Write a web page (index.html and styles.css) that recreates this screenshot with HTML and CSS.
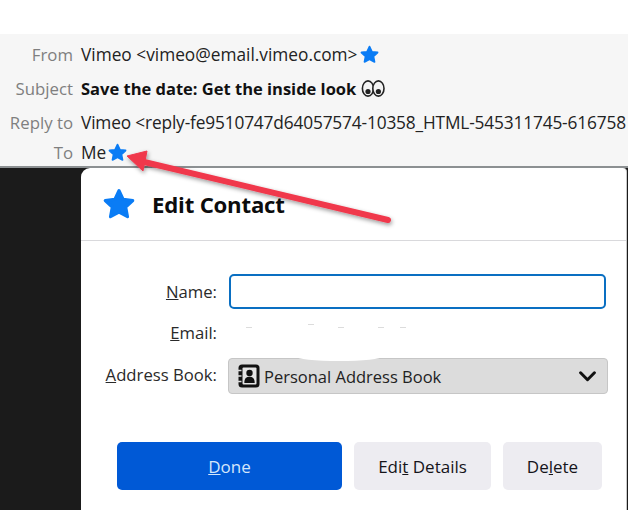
FILE: index.html
```html
<!DOCTYPE html>
<html lang="en">
<head>
<meta charset="utf-8">
<title>Edit Contact</title>
<link rel="stylesheet" href="styles.css">
</head>
<body>
<div class="page">
  <section class="headers">
    <div class="row row-from"><span class="key">From</span><span class="val">Vimeo &lt;vimeo@email.vimeo.com&gt;</span>
      <svg class="star star-sm" viewBox="0 0 24 24"><path d="M12 3l2.800 5.900 6.400.8-4.700 4.400 1.200 6.400L12 17.400l-5.700 3.100 1.200-6.400-4.700-4.400 6.400-.8z"/></svg></div>
    <div class="row row-subject"><span class="key">Subject</span><span class="val subject">Save the date: Get the inside look</span>
      <svg class="eyes" viewBox="0 0 24 18"><ellipse cx="7" cy="9" rx="5.600" ry="7.600"/><ellipse cx="17.400" cy="9" rx="5.600" ry="7.600"/><circle class="pupil" cx="7" cy="12" r="2.600"/><circle class="pupil" cx="17.400" cy="12" r="2.600"/></svg></div>
    <div class="row row-reply"><span class="key">Reply to</span><span class="val val-reply">Vimeo &lt;reply-fe9510747d64057574-10358_HTML-545311745-616758</span></div>
    <div class="row row-to"><span class="key">To</span><span class="val">Me</span>
      <svg class="star star-sm star-to" viewBox="0 0 24 24"><path d="M12 3l2.800 5.900 6.400.8-4.700 4.400 1.200 6.400L12 17.400l-5.700 3.100 1.200-6.400-4.700-4.400 6.400-.8z"/></svg></div>
  </section>
  <main class="stage">
    <div class="panel">
      <header class="panel-head">
        <svg class="star star-lg" viewBox="0 0 24 24"><path d="M12 3l2.800 5.900 6.400.8-4.700 4.400 1.200 6.400L12 17.400l-5.700 3.100 1.200-6.400-4.700-4.400 6.400-.8z"/></svg>
        <h1 class="title">Edit Contact</h1>
      </header>
      <form class="form">
        <label class="label label-name"><u>N</u>ame:</label>
        <input class="input" type="text">
        <label class="label label-email"><u>E</u>mail:</label>
        <div class="email-val"><i></i><i></i><i></i><i></i><i></i></div>
        <label class="label label-book"><u>A</u>ddress Book:</label>
        <div class="select">
          <svg class="book" viewBox="0 0 24 24"><rect x="2.500" y="0.500" width="21" height="23" rx="3.500"/><rect class="hole" x="6.500" y="3.500" width="14" height="17" rx="1"/><circle cx="13.500" cy="9" r="3.200"/><path d="M8.300 19c0-4.800 2.200-6.300 5.200-6.300s5.200 1.500 5.200 6.300z"/><path class="ring" d="M.5 6.500h5M.5 12h5M.5 17.500h5"/></svg>
          <span class="select-text">Personal Address Book</span>
          <svg class="chev" viewBox="0 0 16 10"><path d="M1.500 1.500L8 8l6.500-6.500"/></svg>
        </div>
      </form>
      <div class="actions">
        <button class="btn primary" type="button"><u>D</u>one</button>
        <button class="btn edit" type="button">Edi<u>t</u> Details</button>
        <button class="btn del" type="button">De<u>l</u>ete</button>
      </div>
    </div>
  </main>
  <div class="smudge"></div>
  <svg class="arrow" viewBox="0 0 628 510">
    <defs><filter id="sh" x="-10%" y="-30%" width="120%" height="170%"><feDropShadow dx="1" dy="2" stdDeviation="2" flood-color="#000" flood-opacity=".4"/></filter></defs>
    <g filter="url(#sh)"><path class="shaft" d="M140 161L388 220"/><path class="head" d="M127 156L147 151L143 171z"/></g>
  </svg>
</div>
</body>
</html>
```
FILE: styles.css
```css
* { box-sizing: border-box; }
html, body { margin: 0; padding: 0; background: #fff; }
.page {
  position: relative;
  width: 628px;
  height: 510px;
  overflow: hidden;
  padding-top: 34px;
  display: flex;
  flex-direction: column;
  font-family: "Open Sans", "Noto Sans", sans-serif;
  font-size: 16.7px;
  color: #222;
}
.headers {
  height: 134px;
  background: #f6f6f6;
  border-bottom: 2px solid #8c9092;
  flex: none;
  padding-top: 4px;
  overflow: hidden;
}
.row { display: flex; align-items: center; height: 32px; white-space: nowrap; }
.row-subject { height: 36px; }
.row-reply { height: 32px; }
.row-to { height: 28px; }
.key { width: 73px; text-align: right; color: #7f7f7f; flex: none; margin-right: 8px; font-size: 16.800px; }
.val { flex: none; font-size: 17.300px; }
.val-reply { letter-spacing: -.009em; }
.subject { font-weight: 700; color: #111; font-size: 16.500px; }
.star path { fill: #0a7cf5; stroke: #0a7cf5; stroke-width: 2; stroke-linejoin: round; }
.star-sm { width: 21px; height: 21px; margin-left: 2px; flex: none; }
.star-to { margin-left: 1px; }
.eyes { width: 24px; height: 19px; margin-left: 5px; flex: none; }
.eyes ellipse { fill: #f2f2f2; stroke: #222; stroke-width: 1.600; }
.pupil { fill: #222; }
.stage {
  flex: 1;
  background: #1b1b1b;
  padding-left: 81px;
  display: flex;
}
.panel {
  flex: 1;
  background: #fff;
  border-top-left-radius: 9px;
  border-top-right-radius: 4px;
  border-right: 1px solid #c9c9c9;
  margin-right: 1px;
  display: flex;
  flex-direction: column;
}
.panel-head {
  height: 73px;
  flex: none;
  display: flex;
  align-items: center;
  border-bottom: 1px solid #d9d9dc;
  padding-left: 20px;
  gap: 15px;
}
.star-lg { width: 36px; height: 36px; flex: none; }
.title { margin: 0; font-size: 22.200px; font-weight: 700; color: #0c0c0d; letter-spacing: -.2px; }
.form {
  display: grid;
  grid-template-columns: 136px 380px;
  grid-template-rows: 35px 46px 39px;
  column-gap: 11px;
  align-items: center;
  margin-top: 33px;
  flex: none;
}
.label { text-align: right; color: #2a2a2a; white-space: nowrap; }
.input {
  width: 377px;
  height: 35px;
  margin-left: 1px;
  border: 2px solid #0a6fc2;
  border-radius: 5px;
  background: #fff;
  outline: none;
}
.email-val { position: relative; height: 20px; }
.email-val i { position: absolute; top: 5px; width: 6px; height: 1px; background: #dcdcdc; }
.email-val i:nth-child(1) { left: 18px; }
.email-val i:nth-child(2) { left: 80px; top: 2px; }
.email-val i:nth-child(3) { left: 110px; }
.email-val i:nth-child(4) { left: 150px; }
.email-val i:nth-child(5) { left: 172px; }
.select {
  align-self: end;
  height: 36px;
  width: 380px;
  background: #dcdcdc;
  border: 1px solid #c6c6c6;
  border-radius: 4px;
  display: flex;
  align-items: center;
  padding-left: 7px;
  color: #222;
}
.book { width: 24px; height: 24px; flex: none; margin-right: 4px; fill: #111; }
.book .hole { fill: #e4e4e4; }
.book .ring { fill: none; stroke: #dcdcdc; stroke-width: 1.400; stroke-linecap: butt; }
.select-text { flex: 1; font-size: 16.500px; }
.chev { width: 17px; height: 11px; margin-right: 11px; flex: none; fill: none; stroke: #111; stroke-width: 2.800; stroke-linecap: round; stroke-linejoin: round; }
.actions {
  display: flex;
  gap: 12px;
  margin-top: 48px;
  margin-left: 36px;
  flex: none;
}
.btn {
  height: 48px;
  border: 0;
  border-radius: 5px;
  font: inherit;
  font-size: 17px;
  padding: 0;
  background: #edecf1;
  color: #15141a;
}
.edit, .del { font-weight: 500; }
.primary { width: 225px; background: #0059d6; color: #d4e6fb; }
.edit { width: 137px; }
.del { width: 99px; }
.smudge {
  position: absolute;
  left: 296px;
  top: 352px;
  width: 86px;
  height: 9px;
  background: #fff;
  border-radius: 50%;
}
.arrow { position: absolute; left: 0; top: 0; width: 628px; height: 510px; pointer-events: none; }
.shaft { stroke: #f0384c; stroke-width: 6; stroke-linecap: round; fill: none; }
.head { fill: #f0384c; stroke: #f0384c; stroke-width: 1; stroke-linejoin: round; }
```
